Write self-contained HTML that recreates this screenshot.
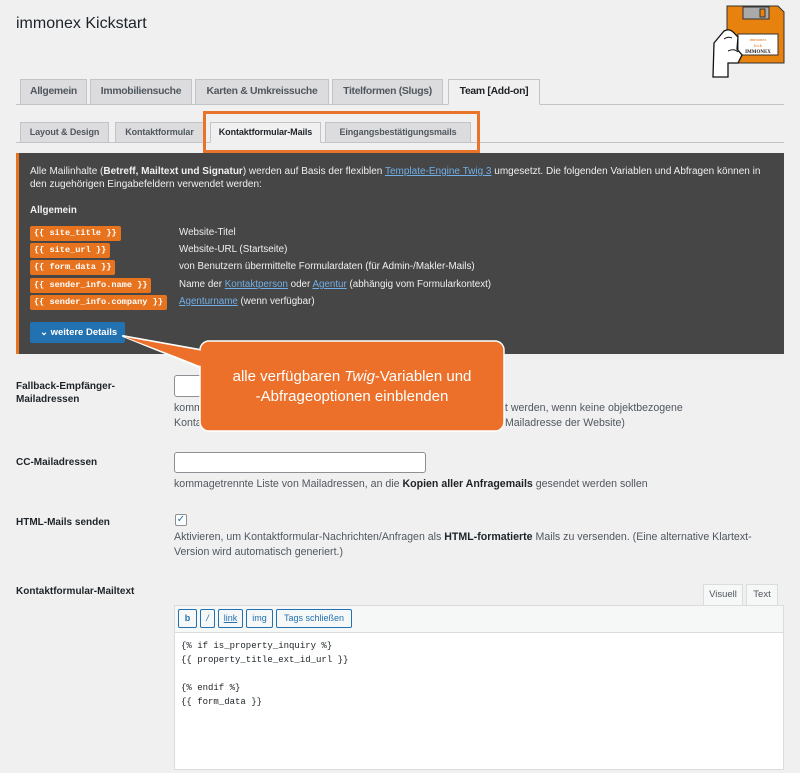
<!DOCTYPE html>
<html><head><meta charset="utf-8">
<style>
*{box-sizing:border-box;margin:0;padding:0}
body{width:800px;height:773px;background:#f0f0f1;font-family:"Liberation Sans",sans-serif;color:#1d2327;position:relative;overflow:hidden;font-size:10px}
.a{position:absolute}
.tab{position:absolute;top:79px;height:26px;background:#dcdcde;border:1px solid #c3c4c7;font-size:10.4px;font-weight:bold;color:#50575e;line-height:24px;text-align:center;letter-spacing:-0.3px;white-space:nowrap}
.st{position:absolute;top:122px;height:21px;background:#dcdcde;border:1px solid #c3c4c7;font-size:9px;font-weight:bold;color:#50575e;line-height:19px;text-align:center;white-space:nowrap;letter-spacing:-0.1px}
.tag{position:absolute;left:30px;height:15px;background:#e8731e;color:#fff;font-family:"Liberation Mono",monospace;font-weight:bold;font-size:8.6px;line-height:15px;padding:0 4px;border-radius:2px;white-space:nowrap}
.d{position:absolute;left:179px;color:#f0f0f0;font-size:9.8px}
.d u{color:#72aee6}
.lbl{position:absolute;left:16px;font-weight:bold;font-size:10px;color:#1d2327;line-height:13px}
.inp{position:absolute;background:#fff;border:1px solid #8c8f94;border-radius:3px}
.desc{position:absolute;left:174px;font-size:10.6px;color:#50575e;line-height:15px;white-space:nowrap}
.eb{position:absolute;top:609px;height:19px;border:1px solid #2271b1;border-radius:2px;background:#f6f7f7;color:#2271b1;font-size:9px;line-height:17px;text-align:center}
.code{font-family:"Liberation Mono",monospace;font-size:9px;color:#1d2327;position:absolute;left:181px}
</style></head><body>
<div class="a" style="left:16px;top:15px;font-size:16px;color:#1d2327">immonex Kickstart</div>
<svg class="a" style="left:710px;top:3px" width="80" height="78" viewBox="0 0 80 78">
<path d="M17 3 H68 L74 9 V60 H17 Z" fill="#e8820e" stroke="#333" stroke-width="1"/>
<rect x="33" y="4" width="26" height="12" fill="#aaa" stroke="#333"/>
<rect x="50" y="6" width="5" height="8" fill="#e8820e" stroke="#333"/>
<rect x="28" y="31" width="40" height="21" fill="#fff" stroke="#333"/>
<text x="48" y="38" font-size="4.5" fill="#e8731e" text-anchor="middle" font-family="Liberation Serif">immonex</text>
<text x="48" y="44" font-size="4.5" fill="#e8731e" text-anchor="middle" font-family="Liberation Serif">kick</text>
<text x="48" y="50" font-size="5" font-weight="bold" fill="#222" text-anchor="middle" font-family="Liberation Serif">IMMONEX</text>
<path d="M4 40 L14 28 Q20 25 24 30 L28 34 L27 46 L32 52 L28 60 L18 60 L18 74 L3 74 Z" fill="#fff" stroke="#111" stroke-width="1.3"/>
<path d="M14 36 Q18 33 22 35 M18 48 Q24 45 28 49" fill="none" stroke="#111" stroke-width="1"/>
</svg>

<div class="a" style="left:16px;top:104px;width:768px;height:1px;background:#c3c4c7"></div>
<div class="tab" style="left:20px;width:67px">Allgemein</div>
<div class="tab" style="left:90px;width:102px">Immobiliensuche</div>
<div class="tab" style="left:195px;width:134px">Karten &amp; Umkreissuche</div>
<div class="tab" style="left:332px;width:111px">Titelformen (Slugs)</div>
<div class="tab" style="left:448px;width:92px;background:#f0f0f1;border-bottom-color:#f0f0f1;color:#1d2327">Team [Add-on]</div>

<div class="a" style="left:16px;top:142px;width:768px;height:1px;background:#c3c4c7"></div>
<div class="st" style="left:20px;width:89px">Layout &amp; Design</div>
<div class="st" style="left:115px;width:89px">Kontaktformular</div>
<div class="st" style="left:210px;width:111px;background:#f0f0f1;border-bottom-color:#f0f0f1;color:#1d2327">Kontaktformular-Mails</div>
<div class="st" style="left:325px;width:146px">Eingangsbestätigungsmails</div>
<div class="a" style="left:203px;top:111px;width:277px;height:42px;border:3px solid #e8732a"></div>

<div class="a" style="left:16px;top:153px;width:768px;height:201px;background:#464646;border-left:3px solid #e8731e"></div>
<div class="a" style="left:30px;top:165px;width:742px;color:#f0f0f0;font-size:10px;line-height:13px">Alle Mailinhalte (<b>Betreff, Mailtext und Signatur</b>) werden auf Basis der flexiblen <u style="color:#72aee6">Template-Engine Twig 3</u> umgesetzt. Die folgenden Variablen und Abfragen können in den zugehörigen Eingabefeldern verwendet werden:</div>
<div class="a" style="left:30px;top:205px;color:#f0f0f0;font-weight:bold;font-size:9.8px">Allgemein</div>
<div class="tag" style="top:226px">{{ site_title }}</div><div class="d" style="top:227px">Website-Titel</div>
<div class="tag" style="top:243px">{{ site_url }}</div><div class="d" style="top:244px">Website-URL (Startseite)</div>
<div class="tag" style="top:260px">{{ form_data }}</div><div class="d" style="top:261px">von Benutzern übermittelte Formulardaten (für Admin-/Makler-Mails)</div>
<div class="tag" style="top:278px">{{ sender_info.name }}</div><div class="d" style="top:279px">Name der <u>Kontaktperson</u> oder <u>Agentur</u> (abhängig vom Formularkontext)</div>
<div class="tag" style="top:295px">{{ sender_info.company }}</div><div class="d" style="top:296px"><u>Agenturname</u> (wenn verfügbar)</div>
<div class="a" style="left:30px;top:322px;width:95px;height:21px;background:#2271b1;border-radius:2px;color:#fff;font-weight:bold;font-size:9.5px;line-height:21px;padding-left:10px">&#8964;&nbsp;weitere Details</div>

<div class="lbl" style="top:380px">Fallback-Empfänger-<br>Mailadressen</div>
<div class="inp" style="left:174px;top:375px;width:252px;height:22px"></div>
<div class="desc" style="top:401px">kommagetrennte Liste von Mailadressen, die als Empfänger verwendet werden, wenn keine objektbezogene<br>Kontaktperson oder Agentur verfügbar ist (Standard: die Haupt-Admin-Mailadresse der Website)</div>

<div class="lbl" style="top:456px">CC-Mailadressen</div>
<div class="inp" style="left:174px;top:452px;width:252px;height:21px"></div>
<div class="desc" style="top:477px">kommagetrennte Liste von Mailadressen, an die <b style="color:#1d2327">Kopien aller Anfragemails</b> gesendet werden sollen</div>

<div class="lbl" style="top:516px">HTML-Mails senden</div>
<div class="inp" style="left:175px;top:514px;width:12px;height:12px;border-radius:2px;color:#2271b1;font-size:10px;line-height:10px;text-align:center">✓</div>
<div class="desc" style="top:530px">Aktivieren, um Kontaktformular-Nachrichten/Anfragen als <b style="color:#1d2327">HTML-formatierte</b> Mails zu versenden. (Eine alternative Klartext-<br>Version wird automatisch generiert.)</div>

<div class="lbl" style="top:585px">Kontaktformular-Mailtext</div>
<div class="a" style="left:703px;top:584px;width:40px;height:22px;background:#f6f7f7;border:1px solid #dcdcde;font-size:9.5px;color:#50575e;text-align:center;line-height:20px">Visuell</div>
<div class="a" style="left:746px;top:584px;width:32px;height:22px;background:#f6f7f7;border:1px solid #dcdcde;border-bottom:none;font-size:9.5px;color:#50575e;text-align:center;line-height:20px">Text</div>
<div class="a" style="left:174px;top:605px;width:610px;height:28px;background:#f6f7f7;border:1px solid #dcdcde"></div>
<div class="eb" style="left:178px;width:19px;font-weight:bold">b</div>
<div class="eb" style="left:200px;width:15px;font-style:italic">/</div>
<div class="eb" style="left:218px;width:25px;text-decoration:underline">link</div>
<div class="eb" style="left:246px;width:27px">img</div>
<div class="eb" style="left:276px;width:76px">Tags schließen</div>
<div class="a" style="left:174px;top:632px;width:610px;height:138px;background:#fff;border:1px solid #dcdcde"></div>
<div class="code" style="top:641px">{% if is_property_inquiry %}</div>
<div class="code" style="top:655px">{{ property_title_ext_id_url }}</div>
<div class="code" style="top:683px">{% endif %}</div>
<div class="code" style="top:697px">{{ form_data }}</div>

<svg class="a" style="left:0;top:0" width="800" height="773">
<path d="M123 336 L212 352 L212 372 Z" fill="#ec7029" stroke="#fff" stroke-width="2" stroke-linejoin="round"/>
<rect x="200" y="341" width="304" height="90" rx="9" fill="#ec7029" stroke="#fff" stroke-width="1.5"/>
<path d="M125 337 L214 353 L214 371 Z" fill="#ec7029"/>
<text x="352" y="381" fill="#fff" font-size="15" text-anchor="middle" font-family="Liberation Sans">alle verfügbaren <tspan font-style="italic">Twig</tspan>-Variablen und</text>
<text x="352" y="401" fill="#fff" font-size="15" text-anchor="middle" font-family="Liberation Sans">-Abfrageoptionen einblenden</text>
</svg>
</body></html>
